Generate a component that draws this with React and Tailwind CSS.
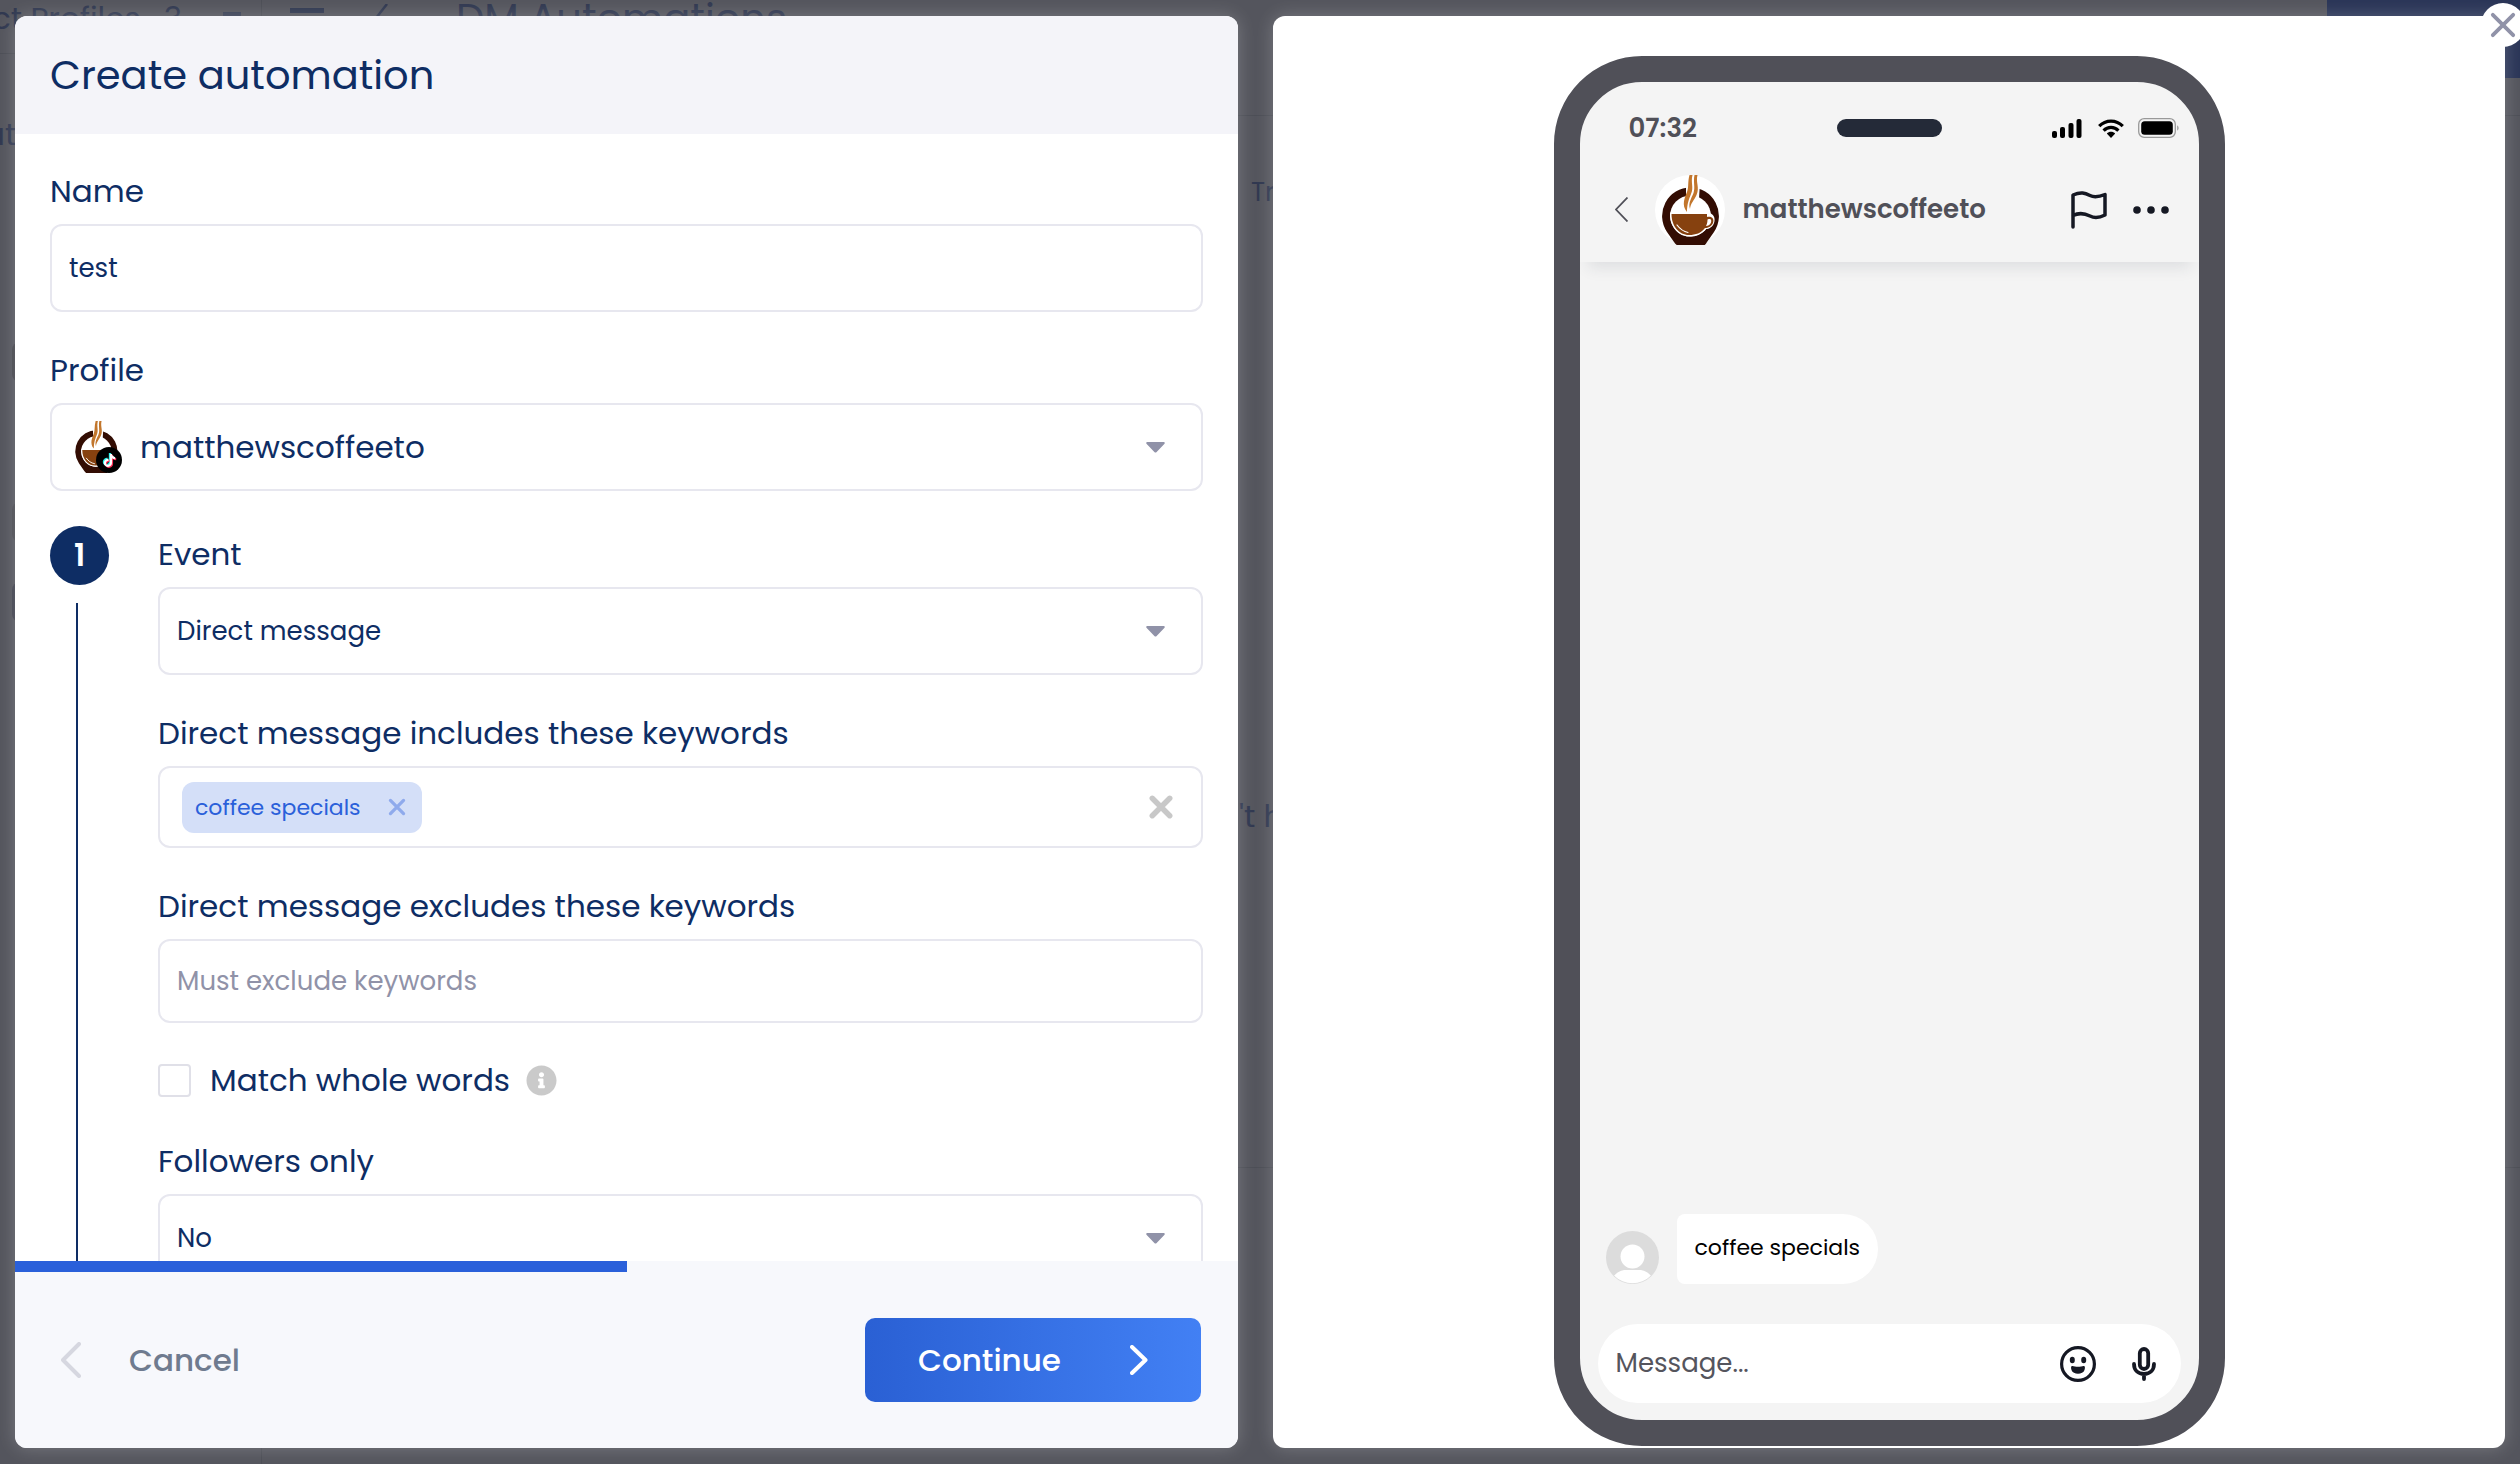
import { FaInfoCircle, FaTiktok } from "react-icons/fa";

function CoffeeLogo({ className }) {
  return (
    <svg viewBox="0 0 70 70" className={className} aria-hidden="true">
      <defs>
        <clipPath id="avatar-round">
          <path d="M0 0H70V35A35 35 0 0 1 52 70.500H18A35 35 0 0 1 0 35Z" />
        </clipPath>
      </defs>
      <circle cx="35" cy="35" r="35" fill="#fff" />
      <g clipPath="url(#avatar-round)">
        <path
          d="M35.500 12.500A28.500 28.500 0 0 0 12 57L19 67Q21.500 71 25 71H47Q50 71 52 67L59 57A28.500 28.500 0 0 0 35.500 12.500Z"
          fill="#330d03"
        />
        <path d="M35.500 20.500A20.500 20.500 0 1 0 35.500 61.500A20.500 20.500 0 1 0 35.500 20.500Z" fill="#fff" />
        <path d="M31 8H45L44 24L37 40H27L31 24Z" fill="#fff" />
        <path d="M15 37.500H53C58 38 61 43 59 48C57.500 52 54 54 51 54C47 59 41 61.500 34 61.500C24 61.500 15 53 15 37.500Z" fill="#fff" />
        <path d="M16.500 39H52V42C57 41 59.500 44 58 48C57 51 53 53 50 53C46 58 41 60 34 60C24 60 16.500 51 16.500 39Z" fill="#86410f" />
        <path d="M52.500 44.500C56 43 57 45 55.800 48C55 50 53 51 51 51C52 49 52.500 47 52.500 44.500Z" fill="#fff" />
        <path d="M22 50C25 54 28 56.500 33 57.500" fill="none" stroke="#fff" strokeWidth="1.200" strokeLinecap="round" />
        <path d="M34.500 0H37.500C35.500 8 39 12 36 19C34 24 32 29 32 37C26 30 30 22 32 17C34 12 32.500 7 34.500 0Z" fill="#c2762c" />
        <path d="M39.500 0H42.500C40.500 8 45 12 41.500 20C39.500 25 35.500 28 35 34C33 28 36.500 23 38.500 18C40.500 12 38 7 39.500 0Z" fill="#c2762c" />
      </g>
    </svg>
  );
}

function Caret() {
  return (
    <svg viewBox="0 0 19 11" className="pointer-events-none h-[11px] w-[19px] shrink-0" aria-hidden="true">
      <path d="M1.500 0H17.500C18.800 0 19.200 1.200 18.300 2L10.400 10.200C9.900 10.700 9.100 10.700 8.600 10.200L.7 2C-.2 1.200.2 0 1.500 0Z" fill="#9092a8" />
    </svg>
  );
}

function Cross({ className, width }) {
  return (
    <svg viewBox="0 0 22 22" className={className} fill="none" stroke="currentColor" strokeWidth={width} strokeLinecap="round" aria-hidden="true">
      <path d="M3 3L19 19M19 3L3 19" />
    </svg>
  );
}

const label = "block text-[31px] leading-[48px] mb-[9px]";
const box = "flex items-center rounded-xl border-2 border-[#e7e7ef] bg-white";

function SelectField({ id, title, value }) {
  return (
    <div>
      <label htmlFor={id} className={label}>{title}</label>
      <div className={`${box} h-[88px] pr-9`}>
        <select id={id} className="h-full min-w-0 flex-1 appearance-none bg-transparent pl-[17px] text-[26px] outline-none">
          <option>{value}</option>
        </select>
        <Caret />
      </div>
    </div>
  );
}

function Backdrop() {
  return (
    <div aria-hidden="true" className="absolute inset-0 flex overflow-hidden bg-[#54555d] whitespace-nowrap text-[#303850]">
      <div className="w-[262px] shrink-0 border-r border-[#4c4e56]">
        <div className="flex h-[54px] items-start justify-between border-b border-[#4c4e56] pr-5 text-[31px] leading-9">
          <span className="-ml-2">ct Profiles · 3</span>
          <span className="mt-3 h-3 w-[18px] bg-[#3a4156]" />
        </div>
        <div className="-ml-4 pt-[62px] text-[31px] leading-9">at</div>
        <div className="ml-3 mt-[190px] h-10 rounded-lg bg-[#44454c]" />
        <div className="ml-3 mt-[120px] h-10 rounded-lg bg-[#4a4b52]" />
        <div className="ml-3 mt-10 h-10 rounded-lg bg-[#40424e]" />
      </div>
      <div className="flex-1">
        <div className="flex h-[116px] items-start border-b border-[#4c4e56]">
          <span className="ml-7 mt-2 h-[5px] w-[34px] bg-[#303850]" />
          <svg viewBox="0 0 20 36" className="ml-12 mt-1 h-9 w-5" fill="none" stroke="#303850" strokeWidth="2.500">
            <path d="M15 0L1 18L15 36" />
          </svg>
          <span className="ml-[64px] text-[40px] leading-9">DM Automations</span>
          <span className="ml-auto h-[78px] w-[193px] bg-[#2a3557]" />
        </div>
        <div className="flex h-[1052px] flex-col border-b border-[#4c4e56] pl-[977px] text-[26px] leading-10">
          <span className="pl-3 pt-14">Triggers</span>
          <span className="pt-[584px] text-[31px]">'t h</span>
        </div>
      </div>
    </div>
  );
}

function AutomationForm() {
  return (
    <section className="flex min-h-0 flex-col overflow-hidden rounded-xl bg-white shadow-[0_0_18px_rgba(255,255,255,0.22)]">
      <header className="flex h-[118px] shrink-0 items-center bg-[#f4f4f9] px-[35px]">
        <h1 className="text-[40px]">Create automation</h1>
      </header>
      <form className="flex min-h-0 flex-1 flex-col gap-[34px] overflow-hidden px-[35px] pt-[33px]">
        <div>
          <label htmlFor="name" className={label}>Name</label>
          <input id="name" defaultValue="test" className={`${box} h-[88px] w-full px-[17px] text-[26px] outline-none`} />
        </div>
        <div>
          <label htmlFor="profile" className={label}>Profile</label>
          <div className={`${box} h-[88px] pl-[18px] pr-9`}>
            <div className="relative size-[52px] shrink-0">
              <CoffeeLogo className="size-[52px]" />
              <span className="absolute bottom-0 right-0 flex size-[26px] items-center justify-center rounded-full bg-black">
                <FaTiktok className="absolute size-[13px] -translate-x-px -translate-y-px text-[#25f4ee]" />
                <FaTiktok className="absolute size-[13px] translate-x-px translate-y-px text-[#fe2c55]" />
                <FaTiktok className="absolute size-[13px] text-white" />
              </span>
            </div>
            <select id="profile" className="h-full min-w-0 flex-1 appearance-none bg-transparent pl-[18px] text-[31px] outline-none">
              <option>matthewscoffeeto</option>
            </select>
            <Caret />
          </div>
        </div>
        <div className="mt-px flex gap-[49px]">
          <div className="flex shrink-0 flex-col items-center">
            <span className="flex size-[59px] items-center justify-center rounded-full bg-[#0e2d64] text-[31px] font-semibold text-white">1</span>
            <span className="mr-1.5 mt-[18px] w-0.5 flex-1 bg-[#0e2d64]" />
          </div>
          <div className="flex min-w-0 flex-1 flex-col gap-[34px] pt-1">
            <SelectField id="event" title="Event" value="Direct message" />
            <div>
              <label htmlFor="includes" className={label}>Direct message includes these keywords</label>
              <div className={`${box} h-[82px] pl-[22px] pr-7`}>
                <span className="flex h-[51px] items-center gap-[27px] rounded-xl bg-[#d4dff8] pl-[13px] pr-4 text-[22px] text-[#2a60da]">
                  coffee specials
                  <button type="button" aria-label="Remove coffee specials" className="text-[#8faaec]">
                    <Cross className="size-[18px]" width="4" />
                  </button>
                </span>
                <input id="includes" className="min-w-0 flex-1 bg-transparent px-3 text-[26px] outline-none" />
                <button type="button" aria-label="Clear keywords" className="text-[#c8c8c8]">
                  <Cross className="size-6" width="5" />
                </button>
              </div>
            </div>
            <div>
              <label htmlFor="excludes" className={label}>Direct message excludes these keywords</label>
              <input id="excludes" placeholder="Must exclude keywords" className={`${box} h-[84px] w-full px-[17px] text-[26px] outline-none placeholder:text-[#9092a8]`} />
            </div>
            <div className="flex h-[46px] items-center">
              <input id="whole" type="checkbox" className="size-[33px] appearance-none rounded border-2 border-[#e0e0e8] bg-white checked:bg-[#2a60da]" />
              <label htmlFor="whole" className="pl-[19px] text-[31px]">Match whole words</label>
              <FaInfoCircle className="ml-4 size-[31px] text-[#cacaca]" />
            </div>
            <SelectField id="followers" title="Followers only" value="No" />
          </div>
        </div>
      </form>
      <div className="h-[11px] shrink-0 bg-[#f7f8fc]" role="progressbar" aria-label="Progress" aria-valuenow={50} aria-valuemin={0} aria-valuemax={100}>
        <div className="h-full w-1/2 bg-[#2a60da]" />
      </div>
      <footer className="flex h-44 shrink-0 items-center justify-between bg-[#f7f8fc] pl-[46px] pr-[37px]">
        <button type="button" className="flex items-center gap-12 text-[31px] font-medium text-[#6f7b8f]">
          <svg viewBox="0 0 20 36" className="h-9 w-5" fill="none" stroke="#d6d7e0" strokeWidth="4" strokeLinecap="round" strokeLinejoin="round" aria-hidden="true">
            <path d="M18 2L2 18L18 34" />
          </svg>
          Cancel
        </button>
        <button type="button" className="flex h-[84px] w-[336px] items-center justify-between rounded-[10px] bg-linear-to-r from-[#2a60d4] to-[#4280f4] px-[53px] text-[31px] font-medium text-white">
          Continue
          <svg viewBox="0 0 18 30" className="h-[30px] w-[18px]" fill="none" stroke="currentColor" strokeWidth="4" strokeLinecap="round" strokeLinejoin="round" aria-hidden="true">
            <path d="M2 2L15.500 15L2 28" />
          </svg>
        </button>
      </footer>
    </section>
  );
}

function StatusIcons() {
  return (
    <div className="flex items-center gap-4 justify-self-end pr-5">
      <svg viewBox="0 0 30 19" className="h-[19px] w-[30px]" aria-hidden="true">
        <rect x="0" y="12" width="5" height="7" rx="2" />
        <rect x="8" y="8" width="5" height="11" rx="2" />
        <rect x="16.500" y="4" width="5" height="15" rx="2" />
        <rect x="24.500" y="0" width="5" height="19" rx="2" />
      </svg>
      <svg viewBox="0 0 26 19" className="h-[19px] w-[26px]" fill="none" stroke="#000" strokeWidth="3.200" aria-hidden="true">
        <path d="M1.200 7.200C7.800.4 18.200.4 24.800 7.200" />
        <path d="M5.600 11.600C9.800 7.400 16.200 7.400 20.400 11.600" />
        <path d="M8.800 14.600C11 12.200 15 12.200 17.200 14.600L13 19Z" fill="#000" stroke="none" />
      </svg>
      <svg viewBox="0 0 41 20" className="-ml-0.5 h-5 w-[41px]" aria-hidden="true">
        <rect x=".7" y=".7" width="36.600" height="18.600" rx="5.500" fill="none" stroke="#999" strokeWidth="1.300" />
        <rect x="3.200" y="3.200" width="31.600" height="13.600" rx="3.500" />
        <path d="M39 7.500C41.300 8 41.300 12 39 12.500Z" fill="#aaa" />
      </svg>
    </div>
  );
}

function PhonePreview() {
  return (
    <div className="flex w-[671px] max-w-full flex-col overflow-hidden rounded-[88px] border-[26px] border-[#505058] bg-[#f4f4f4]">
      <div className="grid h-[92px] shrink-0 grid-cols-[1fr_auto_1fr] items-center">
        <span className="pl-[49px] text-[26px] font-semibold text-[#505058]">07:32</span>
        <span className="h-[18px] w-[105px] rounded-full bg-[#242a38]" />
        <StatusIcons />
      </div>
      <div className="flex h-[88px] shrink-0 items-start pl-[35px] pr-[30px] shadow-[0_14px_14px_-8px_rgba(40,50,70,0.1)]">
        <div className="flex h-[71px] w-full items-center">
          <button type="button" aria-label="Back">
            <svg viewBox="0 0 13 25" className="h-[25px] w-[13px]" fill="none" stroke="#505058" strokeWidth="1.800" aria-hidden="true">
              <path d="M12.500 .5L1 12.500L12.500 24.500" />
            </svg>
          </button>
          <CoffeeLogo className="ml-[27px] size-[70px] shrink-0" />
          <span className="ml-[18px] text-[26px] font-semibold text-[#505058]">matthewscoffeeto</span>
          <button type="button" aria-label="Report" className="ml-auto">
            <svg viewBox="0 0 36 38" className="h-[38px] w-9" fill="none" stroke="#151823" strokeWidth="3.500" strokeLinecap="round" strokeLinejoin="round" aria-hidden="true">
              <path d="M2 36V4C10 .5 14 2 19 4.500C24 7 29 5.500 34 3.500V24C29 26.500 24 27.500 19 25C14 22.500 9 21 2 24.500" />
            </svg>
          </button>
          <button type="button" aria-label="More" className="ml-[26px]">
            <svg viewBox="0 0 36 8" className="h-2 w-9" fill="#151823" aria-hidden="true">
              <circle cx="4" cy="4" r="3.800" />
              <circle cx="18" cy="4" r="3.800" />
              <circle cx="32" cy="4" r="3.800" />
            </svg>
          </button>
        </div>
      </div>
      <div className="flex flex-1 items-end gap-[18px] pb-10 pl-[26px]">
        <svg viewBox="0 0 53 53" className="size-[53px]" aria-hidden="true">
          <defs>
            <clipPath id="person-round"><circle cx="26.500" cy="26.500" r="25.800" /></clipPath>
          </defs>
          <circle cx="26.500" cy="26.500" r="26.500" fill="#dcdcdc" />
          <g clipPath="url(#person-round)" fill="#fff">
            <circle cx="26.500" cy="25.500" r="12" />
            <path d="M6 53V47C11 41 15 39 20 39H33C38 39 42 41 47 47V53Z" />
          </g>
        </svg>
        <div className="flex h-[70px] items-center rounded-l-lg rounded-r-[35px] bg-white px-[18px] pb-1 text-[22px] text-black">coffee specials</div>
      </div>
      <div className="mx-[18px] mb-[17px] flex h-[79px] shrink-0 items-center gap-9 rounded-full bg-white pl-[18px] pr-[25px]">
        <input aria-label="Message" placeholder="Message..." className="min-w-0 flex-1 bg-transparent text-[26px] outline-none placeholder:text-[#55555d]" />
        <button type="button" aria-label="Emoji">
          <svg viewBox="0 0 36 36" className="size-9" aria-hidden="true">
            <circle cx="18" cy="18" r="16.400" fill="none" stroke="#151823" strokeWidth="3.200" />
            <ellipse cx="12.300" cy="14" rx="2.500" ry="3.200" fill="#151823" />
            <ellipse cx="23.700" cy="14" rx="2.500" ry="3.200" fill="#151823" />
            <path d="M12.500 20C15 21 21 21 23.500 20C25.200 19.700 25.200 22 24.500 24C23 29 13 29 11.500 24C10.800 22 10.800 19.700 12.500 20Z" fill="#151823" />
          </svg>
        </button>
        <button type="button" aria-label="Voice message">
          <svg viewBox="0 0 24 34" className="h-[34px] w-6" fill="none" stroke="#151823" strokeWidth="3.800" strokeLinecap="round" aria-hidden="true">
            <rect x="7.800" y="2" width="8.400" height="20" rx="4.200" />
            <path d="M2 17C2 23.500 6.500 27 12 27S22 23.500 22 17M12 27V32" />
          </svg>
        </button>
      </div>
    </div>
  );
}

export default function App() {
  return (
    <main className="relative h-screen overflow-hidden font-['Poppins','Inter',sans-serif] text-[#0e2d64]">
      <Backdrop />
      <div className="relative grid h-full grid-cols-[1223fr_1232fr] gap-[35px] px-[15px] py-4">
        <AutomationForm />
        <section className="relative flex min-h-0 justify-center rounded-xl bg-white pb-0.5 pt-10 shadow-[0_0_18px_rgba(255,255,255,0.22)]">
          <PhonePreview />
          <button type="button" aria-label="Close" className="absolute -right-5 -top-[13px] flex size-11 items-center justify-center rounded-full bg-white text-[#9092a8]">
            <Cross className="size-7" width="3" />
          </button>
        </section>
      </div>
    </main>
  );
}
